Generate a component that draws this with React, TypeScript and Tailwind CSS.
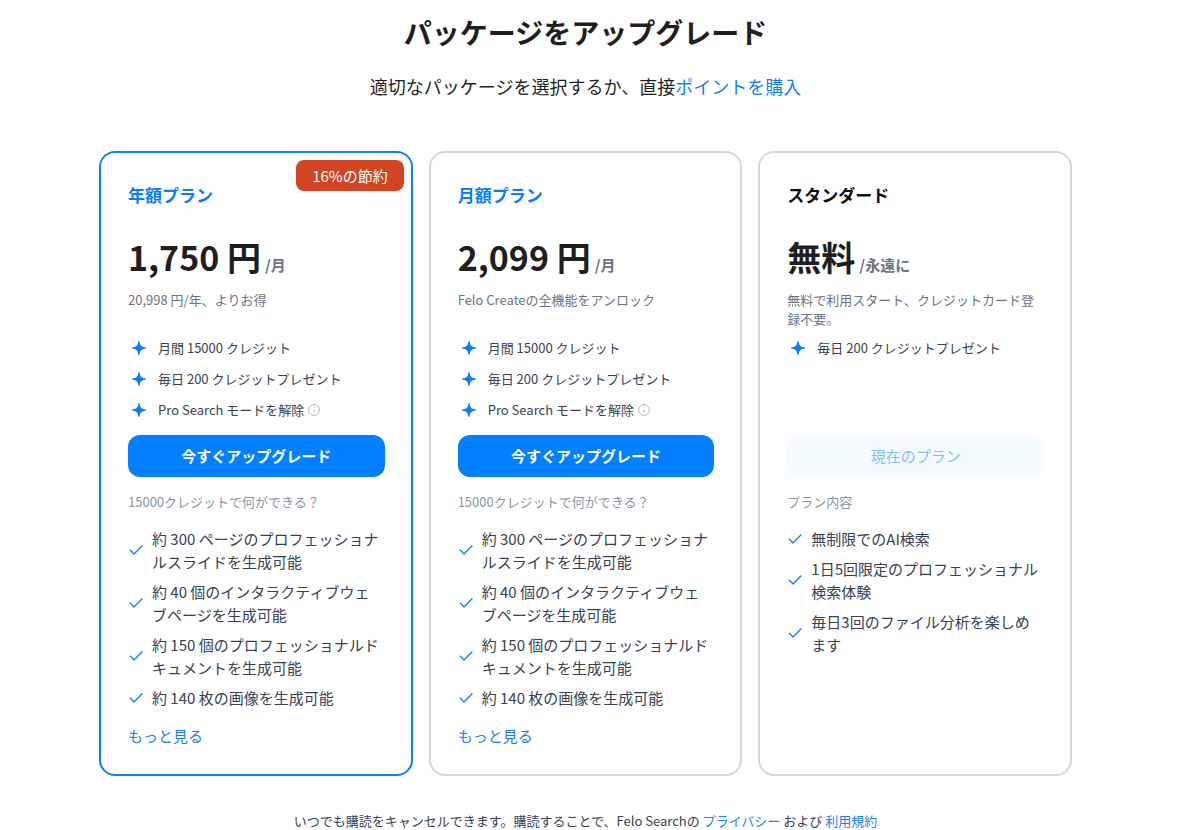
import React from "react";

type Plan = {
  name: string;
  highlighted?: boolean;
  accent: boolean;
  badge?: string;
  price: string;
  period: string;
  description: string;
  credits: { text: string; info?: boolean }[];
  action: string;
  current?: boolean;
  caption: string;
  features: string[];
  more?: boolean;
};

const paidCredits = [
  { text: "月間 15000 クレジット" },
  { text: "毎日 200 クレジットプレゼント" },
  { text: "Pro Search モードを解除", info: true },
];

const paidFeatures = [
  "約 300 ページのプロフェッショナルスライドを生成可能",
  "約 40 個のインタラクティブウェブページを生成可能",
  "約 150 個のプロフェッショナルドキュメントを生成可能",
  "約 140 枚の画像を生成可能",
];

const plans: Plan[] = [
  {
    name: "年額プラン",
    highlighted: true,
    accent: true,
    badge: "16%の節約",
    price: "1,750 円",
    period: "/月",
    description: "20,998 円/年、よりお得",
    credits: paidCredits,
    action: "今すぐアップグレード",
    caption: "15000クレジットで何ができる？",
    features: paidFeatures,
    more: true,
  },
  {
    name: "月額プラン",
    accent: true,
    price: "2,099 円",
    period: "/月",
    description: "Felo Createの全機能をアンロック",
    credits: paidCredits,
    action: "今すぐアップグレード",
    caption: "15000クレジットで何ができる？",
    features: paidFeatures,
    more: true,
  },
  {
    name: "スタンダード",
    accent: false,
    price: "無料",
    period: "/永遠に",
    description: "無料で利用スタート、クレジットカード登録不要。",
    credits: [{ text: "毎日 200 クレジットプレゼント" }],
    action: "現在のプラン",
    current: true,
    caption: "プラン内容",
    features: [
      "無制限でのAI検索",
      "1日5回限定のプロフェッショナル検索体験",
      "毎日3回のファイル分析を楽しめます",
    ],
  },
];

function Sparkle() {
  return (
    <svg viewBox="0 0 14 14" className="size-[14px] shrink-0" fill="#0a7cff" aria-hidden="true">
      <path d="M7 0C7.400 0 7.600.4 7.700.9 8.200 4.500 9.500 5.800 13.100 6.300 13.600 6.400 14 6.600 14 7S13.600 7.600 13.100 7.700C9.500 8.200 8.200 9.500 7.700 13.100 7.600 13.600 7.400 14 7 14S6.400 13.600 6.300 13.100C5.800 9.500 4.500 8.200.9 7.700.4 7.600 0 7.400 0 7S.4 6.400.9 6.300C4.500 5.800 5.800 4.500 6.300.9 6.400.4 6.600 0 7 0Z" />
    </svg>
  );
}

function Check() {
  return (
    <svg viewBox="0 0 16 16" className="size-4 shrink-0" fill="none" stroke="#1680f5" strokeWidth="1.4" aria-hidden="true">
      <path d="M2 7.800 6 11.900 14.400 3.600" />
    </svg>
  );
}

function Info() {
  return (
    <svg viewBox="0 0 12 12" className="size-3 shrink-0" fill="none" stroke="#aeb4bd" strokeWidth="1" aria-hidden="true">
      <circle cx="6" cy="6" r="5.400" />
      <path d="M6 5.300V8.700M6 3.200V4.200" />
    </svg>
  );
}

function PlanCard({ plan }: { plan: Plan }) {
  return (
    <section
      className={`relative flex flex-col rounded-2xl border-2 pt-[27px] pr-[26px] pb-[27px] pl-[27px] ${
        plan.highlighted ? "border-[#1680f5]" : "border-[#d4d6e4]"
      }`}
    >
      {plan.badge && (
        <span className="absolute top-[7px] right-[7px] rounded-lg bg-[#d14424] px-4 text-[15px] leading-[31px] text-white">
          {plan.badge}
        </span>
      )}
      <h2 className={`text-[17px] leading-[30px] font-bold ${plan.accent ? "text-[#0a7cff]" : "text-[#0b0f1c]"}`}>
        {plan.name}
      </h2>
      <p className="mt-[23px] flex items-baseline gap-1 leading-[48px] font-bold">
        <span className="text-[34px] text-[#1f1f1f]">{plan.price}</span>
        <span className="text-[15px] text-[#6b7280]">{plan.period}</span>
      </p>
      <p className="mt-px min-h-[42px] text-[13px] leading-[19px] text-[#6b7280]">{plan.description}</p>
      <ul className="flex min-h-[103px] flex-col gap-[7px] pt-1">
        {plan.credits.map((c) => (
          <li key={c.text} className="flex items-center gap-3 pl-1 text-[13px] leading-6 text-[#374151]">
            <Sparkle />
            <span className="flex items-center gap-1">
              {c.text}
              {c.info && <Info />}
            </span>
          </li>
        ))}
      </ul>
      <button
        type="button"
        disabled={plan.current}
        className={`h-[42px] rounded-xl text-[15px] ${
          plan.current ? "bg-[#f5fcff] text-[#84bdfb]" : "bg-[#0280ff] font-bold text-white"
        }`}
      >
        {plan.action}
      </button>
      <p className="mt-[15px] text-[13px] leading-5 text-[#8a94a6]">{plan.caption}</p>
      <ul className="mt-[15px] flex flex-col gap-[7px]">
        {plan.features.map((f) => (
          <li key={f} className="flex items-center gap-2 pr-1 text-[15px] leading-[23px] text-[#374151]">
            <Check />
            <span>{f}</span>
          </li>
        ))}
      </ul>
      {plan.more && (
        <a href="#more" className="mt-[15px] self-start text-[15px] leading-[23px] text-[#1680f5]">
          もっと見る
        </a>
      )}
    </section>
  );
}

export default function App() {
  return (
    <main className="bg-white pr-[29px] font-['Noto_Sans_CJK_JP',sans-serif]" lang="ja">
      <div className="mx-auto max-w-[973px]">
        <header className="pt-3 text-center">
          <h1 className="text-[28px] leading-10 font-bold text-[#1f1f1f]">パッケージをアップグレード</h1>
          <p className="mt-[19px] text-[18px] leading-[30px] text-[#1f1f1f]">
            適切なパッケージを選択するか、直接
            <a href="#points" className="text-[#1680f5]">ポイントを購入</a>
          </p>
        </header>
        <div className="mt-[50px] grid grid-cols-3 gap-4">
          {plans.map((p) => (
            <PlanCard key={p.name} plan={p} />
          ))}
        </div>
        <footer className="mt-[35px] text-center text-[13px] leading-5 text-[#374151]">
          いつでも購読をキャンセルできます。購読することで、Felo Searchの{" "}
          <a href="#privacy" className="text-[#1680f5]">プライバシー</a> および{" "}
          <a href="#terms" className="text-[#1680f5]">利用規約</a>
        </footer>
      </div>
    </main>
  );
}
